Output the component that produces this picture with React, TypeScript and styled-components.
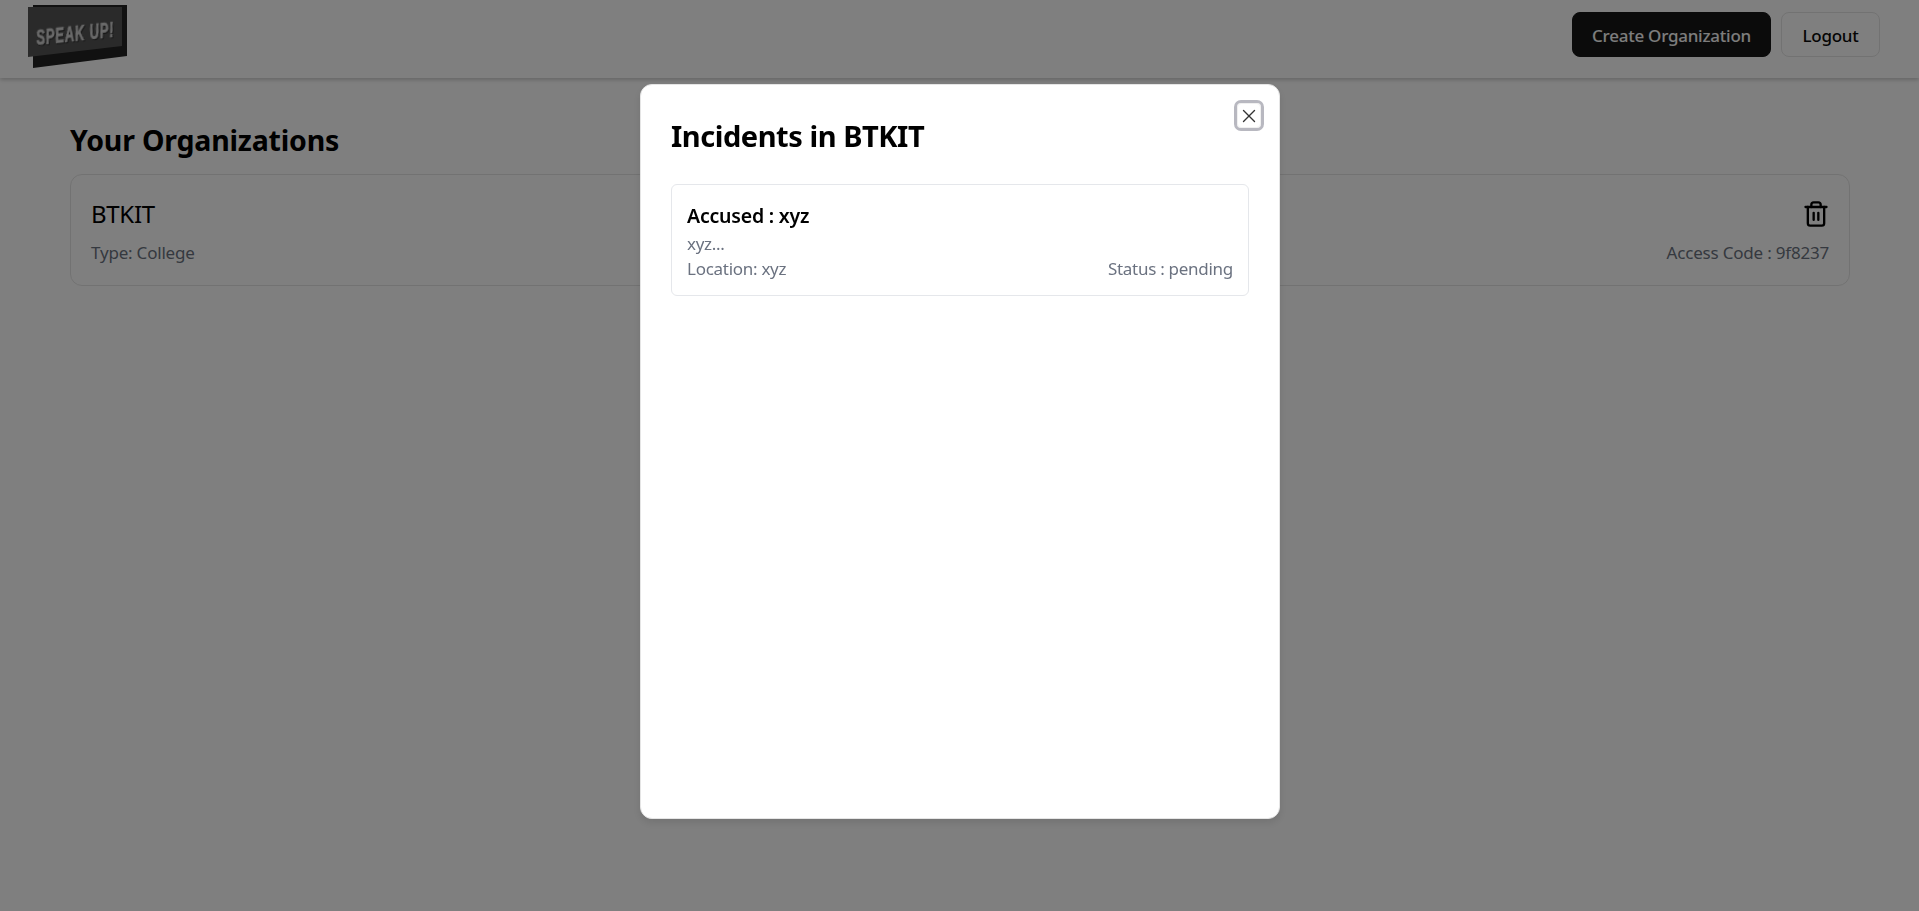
import React from "react";
import styled, { createGlobalStyle } from "styled-components";
import { Trash2, X } from "lucide-react";

const GlobalStyle = createGlobalStyle`
  html, body {
    margin: 0;
    padding: 0;
    background: #fff;
    font-family: "Noto Sans", "Open Sans", sans-serif;
    color: #000;
  }
  * { box-sizing: border-box; }
`;

const Page = styled.div`
  height: 911px;
  overflow: hidden;
`;

const Navbar = styled.header`
  height: 78px;
  padding: 0 39px 0 27px;
  display: flex;
  align-items: flex-start;
  justify-content: space-between;
  background: #fff;
  box-shadow: 0 2px 4px rgba(0, 0, 0, 0.2);
`;

const Logo = styled.svg`
  width: 102px;
  height: 68px;
  display: block;
  margin-top: 4px;
  overflow: visible;
`;

const LogoText = styled.text`
  font-family: "Liberation Sans", sans-serif;
  font-weight: 700;
  font-style: italic;
  font-size: 22px;
  letter-spacing: 1.2px;
  fill: #d4d4d4;
  stroke: #d4d4d4;
  stroke-width: 0.7px;
  filter: drop-shadow(1px 1px 0 #222);
`;

const Actions = styled.div`
  display: flex;
  gap: 10px;
  padding-top: 12px;
`;

const Button = styled.button<{ $primary?: boolean }>`
  height: 45px;
  padding: 1px ${(p) => (p.$primary ? "19px" : "20.5px")} 0;
  border-radius: 8px;
  font: 500 17px "Noto Sans", sans-serif;
  letter-spacing: -0.25px;
  color: ${(p) => (p.$primary ? "#fafafa" : "#0a0a0a")};
  background: ${(p) => (p.$primary ? "#171717" : "#fff")};
  border: 1px solid ${(p) => (p.$primary ? "#171717" : "#e5e5e5")};
`;

const Main = styled.main`
  padding: 41px 69px 0 70px;
`;

const Heading = styled.h1`
  margin: 0 0 13px;
  font-size: 28.5px;
  line-height: 42px;
  font-weight: 700;
  letter-spacing: -0.2px;
`;

const OrgCard = styled.div`
  height: 112px;
  padding: 21px 20px 20px;
  border: 1px solid #e5e5e5;
  border-radius: 12px;
  display: flex;
  flex-direction: column;
  gap: 8px;
`;

const Row = styled.div`
  display: flex;
  justify-content: space-between;
  align-items: center;
`;

const OrgName = styled.h2`
  margin: 0;
  font-size: 24px;
  line-height: 36px;
  font-weight: 400;
  letter-spacing: -0.3px;
`;

const TrashIcon = styled(Trash2)`
  margin-right: -1px;
`;

const Meta = styled.span`
  font-size: 17px;
  line-height: 26px;
  color: #6b7280;
  letter-spacing: -0.2px;
`;

const Overlay = styled.div`
  position: fixed;
  inset: 0;
  background: rgba(0, 0, 0, 0.5);
`;

const Modal = styled.div`
  position: absolute;
  left: 640px;
  top: 84px;
  width: 640px;
  height: 735px;
  padding: 30px;
  background: #fff;
  border: 1px solid #e5e5e5;
  border-radius: 12px;
  box-shadow: 0 4px 8px rgba(0, 0, 0, 0.1);
`;

const CloseButton = styled.button`
  position: absolute;
  top: 18px;
  right: 18px;
  width: 24px;
  height: 25px;
  padding: 0;
  display: flex;
  align-items: center;
  justify-content: center;
  background: #fff;
  color: #333;
  border: 1px solid #f0f0f0;
  border-radius: 4px;
  outline: 3px solid #b8b8c0;
`;

const ModalTitle = styled.h2`
  margin: 0 0 27px;
  font-size: 29px;
  line-height: 42px;
  font-weight: 700;
  letter-spacing: -0.45px;
`;

const IncidentCard = styled.div`
  height: 112px;
  padding: 16px 15px;
  border: 1px solid #e5e7eb;
  border-radius: 6px;
`;

const Accused = styled.h3`
  margin: 0;
  font-size: 19.5px;
  line-height: 30px;
  font-weight: 600;
  letter-spacing: -0.2px;
`;

const Desc = styled.p`
  margin: 0;
  font-size: 17px;
  line-height: 25px;
  color: #6b7280;
  letter-spacing: -0.28px;
`;

const App = () => {
  return (
    <Page>
      <GlobalStyle />
      <Navbar>
        <Logo viewBox="0 0 102 68">
          <polygon points="6,1 100,1 100,52 6,64" fill="#222" />
          <polygon points="1,3 95,3 95,42 1,53" fill="#555" />
          <LogoText transform="translate(10 41) rotate(-6) scale(0.6 1)">SPEAK UP!</LogoText>
        </Logo>
        <Actions>
          <Button $primary>Create Organization</Button>
          <Button>Logout</Button>
        </Actions>
      </Navbar>
      <Main>
        <Heading>Your Organizations</Heading>
        <OrgCard>
          <Row>
            <OrgName>BTKIT</OrgName>
            <TrashIcon size={28} strokeWidth={2} />
          </Row>
          <Row>
            <Meta>Type: College</Meta>
            <Meta>Access Code : 9f8237</Meta>
          </Row>
        </OrgCard>
      </Main>
      <Overlay>
        <Modal>
          <CloseButton>
            <X size={22} strokeWidth={1.5} />
          </CloseButton>
          <ModalTitle>Incidents in BTKIT</ModalTitle>
          <IncidentCard>
            <Accused>Accused : xyz</Accused>
            <Desc>xyz...</Desc>
            <Row>
              <Desc>Location: xyz</Desc>
              <Desc>Status : pending</Desc>
            </Row>
          </IncidentCard>
        </Modal>
      </Overlay>
    </Page>
  );
};

export default App;
